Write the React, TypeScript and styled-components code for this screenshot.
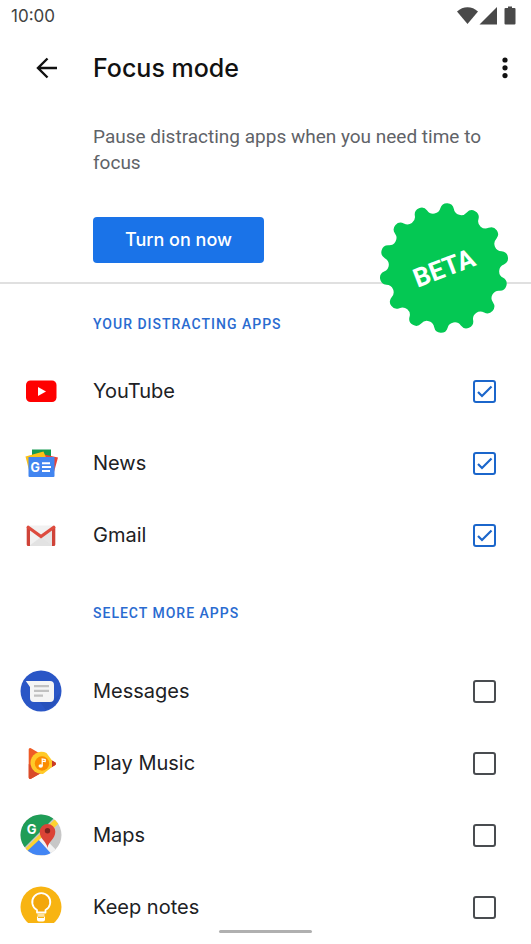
import React, { useState } from "react";
import type { ReactNode } from "react";
import styled, { createGlobalStyle } from "styled-components";

const GlobalStyle = createGlobalStyle`
  *, *::before, *::after { box-sizing: border-box; }
  body {
    margin: 0;
    background: #fff;
    color: #202124;
    font-family: Roboto, "Liberation Sans", sans-serif;
  }
`;

const Screen = styled.div`
  display: flex;
  flex-direction: column;
  height: 100vh;
  background: #fff;
`;

const StatusBar = styled.div`
  display: flex;
  flex: none;
  align-items: center;
  justify-content: space-between;
  height: 31px;
  padding: 0 14px 0 11px;
  color: #424242;
  font: 400 17px/30px Inter, sans-serif;
`;

const StatusIcons = styled.svg`
  display: block;
  width: 60px;
  height: 20px;
`;

const AppBar = styled.header`
  display: flex;
  flex: none;
  align-items: center;
  height: 73px;
  padding: 0 10px 0 31px;
`;

const IconButton = styled.button`
  display: grid;
  place-items: center;
  width: 32px;
  height: 40px;
  padding: 0;
  border: 0;
  background: none;
  color: #111;
  cursor: pointer;
`;

const Title = styled.h1`
  flex: 1;
  margin: 0 0 0 30px;
  color: #111;
  font: 500 25px/32px "Google Sans", Inter, sans-serif;
`;

const Content = styled.main`
  flex: 1;
  min-height: 0;
  overflow-y: auto;
  scrollbar-width: none;
`;

const Intro = styled.section`
  position: relative;
  padding: 20px 48px 19px 93px;
  border-bottom: 2px solid #e0e0e0;
`;

const Description = styled.p`
  margin: 0 0 41px;
  color: #5f6368;
  font-size: 19px;
  line-height: 26px;
`;

const PrimaryButton = styled.button`
  display: block;
  height: 46px;
  padding: 0 32px;
  border: 0;
  border-radius: 4px;
  background: #1a73e8;
  color: #fff;
  font: 500 18px/24px "Google Sans", Inter, sans-serif;
  cursor: pointer;
`;

const Badge = styled.svg`
  position: absolute;
  right: 21px;
  bottom: -52px;
  width: 132px;
  height: 132px;
`;

const SectionTitle = styled.h2<{ $spaced?: boolean }>`
  margin: 0;
  padding: ${(p) => (p.$spaced ? "32px 0 32px 93px" : "30px 0 21px 93px")};
  color: #2a6bd0;
  font-size: 14px;
  font-weight: 500;
  line-height: 20px;
  letter-spacing: 1px;
`;

const List = styled.ul`
  margin: 0;
  padding: 0;
  list-style: none;
`;

const AppRow = styled.label`
  display: flex;
  align-items: center;
  height: 72px;
  padding: 0 35px 0 20px;
  cursor: pointer;
`;

const AppIcon = styled.svg`
  flex: none;
  width: 42px;
  height: 42px;
`;

const AppName = styled.span`
  flex: 1;
  margin-left: 31px;
  color: #202124;
  font: 400 20px/28px "Google Sans", Inter, sans-serif;
`;

const CheckCell = styled.span`
  display: grid;
  width: 23px;
  height: 23px;
  > * { grid-area: 1 / 1; }
`;

const Checkbox = styled.input`
  appearance: none;
  width: 23px;
  height: 23px;
  margin: 0;
  border: 2px solid #494c50;
  border-radius: 3px;
  cursor: pointer;
  &:checked { border-color: #1b66cb; }
  & + svg { visibility: hidden; pointer-events: none; }
  &:checked + svg { visibility: visible; }
`;

const NavBar = styled.footer`
  display: flex;
  flex: none;
  justify-content: center;
  height: 21px;
  padding-top: 7px;
`;

const NavHandle = styled.div`
  width: 93px;
  height: 3px;
  border-radius: 2px;
  background: #b0b0b0;
`;

const point = (radius: number, degrees: number) => {
  const a = (degrees * Math.PI) / 180;
  return `${(66 + radius * Math.sin(a)).toFixed(2)} ${(66 - radius * Math.cos(a)).toFixed(2)}`;
};

const LOBES = 14;
const sealPath = (() => {
  const step = 360 / LOBES;
  let d = `M${point(60, 3 - 6.4)}`;
  for (let i = 0; i < LOBES; i++) {
    const mid = 3 + i * step;
    d += `A6.9 6.9 0 0 1 ${point(60, mid + 6.4)}A7.4 7.4 0 0 0 ${point(60, mid + step - 6.4)}`;
  }
  return d + "Z";
})();

const icons: Record<string, ReactNode> = {
  youtube: (
    <>
      <rect x="6" y="10.5" width="30.5" height="21.5" rx="4.5" fill="#f00" />
      <path d="M18 17v9l8-4.5z" fill="#fff" />
    </>
  ),
  news: (
    <>
      <path d="M12 7.5h19V18H12z" fill="#159a50" />
      <path d="m24 12.5 14 3L34 30l-10-8z" fill="#ea4335" />
      <path d="m5.5 14.5 18-5L27 18 9.5 30z" fill="#fbc116" />
      <path d="M8.5 15H34.5V34a1 1 0 0 1-1 1h-24a1 1 0 0 1-1-1z" fill="#4285f0" />
      <text x="10.5" y="29.5" fontFamily="Inter, sans-serif" fontWeight="700" fontSize="12.5" fill="#fff">G</text>
      <path d="M22 21.3h8M22 25.1h9M22 28.9h8" stroke="#fff" strokeWidth="2" />
    </>
  ),
  gmail: (
    <>
      <rect x="7" y="11.5" width="28" height="20.5" rx="1.5" fill="#f1f1f1" />
      <path d="m9 32 12-9 12 9z" fill="#e2e2e2" />
      <path d="m9 14 12 9 12-9v18z" fill="#d6d6d6" opacity=".45" />
      <path d="M8.2 32a1.5 1.5 0 0 1-1.5-1.5V13L10 14.5V32zM33.8 32a1.5 1.5 0 0 0 1.5-1.5V13L32 14.5V32z" fill="#cf4338" />
      <path d="M8.2 13.2 21 22.6l12.8-9.400" fill="none" stroke="#dd4b3e" strokeWidth="3.2" strokeLinecap="round" />
    </>
  ),
  messages: (
    <>
      <circle cx="21" cy="21" r="20.5" fill="#2a56c6" />
      <path d="M20 32h11l9-9a20.5 20.5 0 0 1-14 17z" fill="#244bb0" opacity=".5" />
      <path d="M5.8 11H30a4 4 0 0 1 4 4v13a4 4 0 0 1-4 4H14a4 4 0 0 1-4-4V17z" fill="#f5f5f5" />
      <path d="M14 16.2h15M14 20.9h15M14 25.6h9" stroke="#c1c1c1" strokeWidth="2.2" />
    </>
  ),
  music: (
    <>
      <path d="M8.7 7.5a1.4 1.4 0 0 1 2.2-1.2L35 20.3a1.7 1.7 0 0 1 0 3L11 36.8a1.5 1.5 0 0 1-2.3-1.2z" fill="#ef5b26" />
      <path d="M8.7 22v13.6a1.5 1.5 0 0 0 2.3 1.2L22 30.6z" fill="#d94b2b" />
      <path d="M32 18.5 35 20.3a1.7 1.7 0 0 1 0 3L32 25z" fill="#c73a26" />
      <path d="M10.5 21a11 11 0 0 1 16-10l5.5 7.5V25l-9 7A11.5 11.5 0 0 1 10.5 21z" fill="#ffca28" />
      <circle cx="22" cy="21.5" r="7.2" fill="#fb8c00" />
      <ellipse cx="20.7" cy="24" rx="2.2" ry="1.8" fill="#fff" />
      <path d="M22.2 24v-7l3 .6v2l-3-.4" fill="none" stroke="#fff" strokeWidth="1.2" />
    </>
  ),
  maps: (
    <>
      <clipPath id="maps-disc"><circle cx="21" cy="21" r="20.5" /></clipPath>
      <g clipPath="url(#maps-disc)">
        <path d="M0 0h42v42H0z" fill="#c7c7c7" />
        <path d="M0 0h38L0 38z" fill="#1f9d57" />
        <path d="M2 38 38 2l4 4L6 42z" fill="#fdd22f" />
        <path d="m4 40 15-14 15 16z" fill="#4285f4" />
        <path d="m19 26 4-3.5L40 40l-5 4z" fill="#f2f2f2" />
      </g>
      <path d="M27.5 34c-.6-6-7.8-9-7.8-16.2a7.8 7.8 0 0 1 15.6 0C35.3 25 28.1 28 27.5 34z" fill="#db4437" />
      <circle cx="27.5" cy="16.8" r="2.7" fill="#7b231e" />
      <text x="6.8" y="20" fontFamily="Inter, sans-serif" fontWeight="700" fontSize="13" fill="#fff">G</text>
    </>
  ),
  keep: (
    <>
      <circle cx="21" cy="21" r="20.5" fill="#f8b412" />
      <path d="M17 30.5h8v3a2 2 0 0 1-2 2h-4a2 2 0 0 1-2-2z" fill="#fff" />
      <path d="M17 26.5V24a9 9 0 1 1 8.5 0v2.500z" fill="#f3a70b" stroke="#fff" strokeWidth="1.8" strokeLinejoin="round" />
      <path d="M17.5 29h7" stroke="#fff" strokeWidth="1.2" />
      <path d="M18 31.5h6" stroke="#f8b412" strokeWidth="1" />
    </>
  ),
};

const distracting = [
  { id: "youtube", name: "YouTube" },
  { id: "news", name: "News" },
  { id: "gmail", name: "Gmail" },
];

const more = [
  { id: "messages", name: "Messages" },
  { id: "music", name: "Play Music" },
  { id: "maps", name: "Maps" },
  { id: "keep", name: "Keep notes" },
];

type AppListProps = {
  apps: { id: string; name: string }[];
  selected: string[];
  onToggle: (id: string) => void;
};

function AppList({ apps, selected, onToggle }: AppListProps) {
  return (
    <List>
      {apps.map(({ id, name }) => (
        <li key={id}>
          <AppRow htmlFor={id}>
            <AppIcon viewBox="0 0 42 42" aria-hidden="true">{icons[id]}</AppIcon>
            <AppName>{name}</AppName>
            <CheckCell>
              <Checkbox id={id} type="checkbox" checked={selected.includes(id)} onChange={() => onToggle(id)} />
              <svg width="23" height="23" viewBox="0 0 23 23" fill="none" aria-hidden="true">
                <path d="m5 12 4 4 9.5-9.5" stroke="#1b66cb" strokeWidth="2.2" />
              </svg>
            </CheckCell>
          </AppRow>
        </li>
      ))}
    </List>
  );
}

export default function App() {
  const [selected, setSelected] = useState(distracting.map((app) => app.id));
  const toggle = (id: string) =>
    setSelected((now) => (now.includes(id) ? now.filter((x) => x !== id) : [...now, id]));

  return (
    <Screen>
      <GlobalStyle />
      <StatusBar>
        <span>10:00</span>
        <StatusIcons viewBox="0 0 60 20" fill="#494949" aria-hidden="true">
          <path d="M0 5.5C6-.2 15-.2 21 5.5L10.5 18z" />
          <path d="M40 1v17.500H22.500z" />
          <path d="M51 .5h4V2h2.500a1 1 0 0 1 1 1v14.500a1 1 0 0 1-1 1h-9a1 1 0 0 1-1-1V3a1 1 0 0 1 1-1H51z" />
        </StatusIcons>
      </StatusBar>
      <AppBar>
        <IconButton aria-label="Back">
          <svg width="22" height="22" viewBox="0 0 22 22" fill="none" stroke="currentColor" strokeWidth="2.4">
            <path d="M21 11H2.500M11.500 1.500 2 11l9.500 9.500" />
          </svg>
        </IconButton>
        <Title>Focus mode</Title>
        <IconButton aria-label="More options">
          <svg width="6" height="22" viewBox="0 0 6 22" fill="currentColor">
            <circle cx="3" cy="3" r="2.6" />
            <circle cx="3" cy="10.8" r="2.6" />
            <circle cx="3" cy="18.6" r="2.6" />
          </svg>
        </IconButton>
      </AppBar>
      <Content>
        <Intro>
          <Description>Pause distracting apps when you need time to focus</Description>
          <PrimaryButton>Turn on now</PrimaryButton>
          <Badge viewBox="0 0 132 132" role="img" aria-label="Beta">
            <path d={sealPath} fill="#04c853" />
            <text
              x="66"
              y="75"
              textAnchor="middle"
              transform="rotate(-21 66 66)"
              fontFamily="Roboto, sans-serif"
              fontWeight="700"
              fontSize="26"
              fill="#fff"
            >
              BETA
            </text>
          </Badge>
        </Intro>
        <SectionTitle>YOUR DISTRACTING APPS</SectionTitle>
        <AppList apps={distracting} selected={selected} onToggle={toggle} />
        <SectionTitle $spaced>SELECT MORE APPS</SectionTitle>
        <AppList apps={more} selected={selected} onToggle={toggle} />
      </Content>
      <NavBar>
        <NavHandle />
      </NavBar>
    </Screen>
  );
}
